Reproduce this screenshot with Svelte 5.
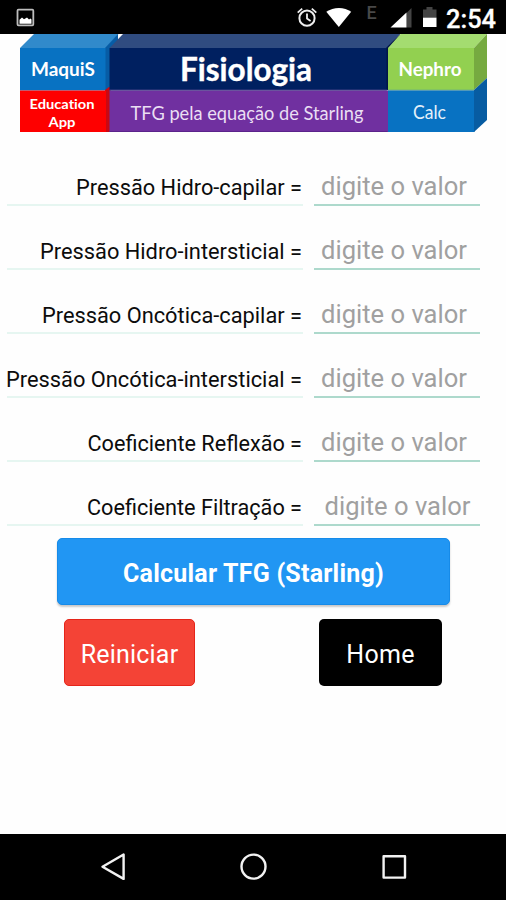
<script>
  const rows = [
    { label: 'Pressão Hidro-capilar =', width: 226 },
    { label: 'Pressão Hidro-intersticial =', width: 262 },
    { label: 'Pressão Oncótica-capilar =', width: 260 },
    { label: 'Pressão Oncótica-intersticial =', width: 296 },
    { label: 'Coeficiente Reflexão =', width: 214.5 },
    { label: 'Coeficiente Filtração =', width: 215, shifted: true }
  ];
</script>

<div class="screen">
  <header class="status">
    <svg width="506" height="34" viewBox="0 0 506 34">
      <rect x="17.5" y="9.700" width="15.800" height="15.600" rx="1" fill="none" stroke="#bdbdbd" stroke-width="1.800" />
      <path d="M19.500 23.800v-4l2.500-2.200 2 1.600 3-1.800 2 2 1.500-1 1 1v4.400z" fill="#fff" />
      <g fill="none" stroke="#eee" stroke-width="2">
        <circle cx="307" cy="18.200" r="7.600" />
        <path d="M307 13.500v5l3.600 2.400M297.700 12.600l4.500-4M316.300 12.600l-4.500-4" stroke-width="1.800" />
      </g>
      <path d="M326.300 11.800C333.500 6.600 344.500 6.600 351.200 11.800L338.800 27z" fill="#fff" />
      <text x="366.500" y="19" class="net">E</text>
      <path d="M411.500 8v19.500h-5V13z" fill="#444" />
      <path d="M406.500 12.500v15h-16z" fill="#fff" />
      <path d="M423 18V9.500h3.500V7h6v2.500h4V18z" fill="#444" />
      <path d="M423 17.700h13.500V27H423z" fill="#fff" />
      <text x="446" y="27.700" class="clock" textLength="50" lengthAdjust="spacingAndGlyphs">2:54</text>
    </svg>
  </header>

  <svg class="banner" width="506" height="100" viewBox="0 34 506 100">
    <path d="M20 48L34 34h84.500L106 48z" fill="#318acb" />
    <path d="M105 48l13-14v14l-8 42h-5z" fill="#075ca5" />
    <path d="M20 48h85.500v42.500H20z" fill="#0872c2" />
    <path d="M105 90l4-3h2v45h-6z" fill="#c90812" />
    <path d="M20 90.500h86V132H20z" fill="#fe0000" />
    <path d="M109.500 48L123 34h277l-13 14z" fill="#304c80" />
    <path d="M386 48l14-14v14l-12 42h-2z" fill="#001548" />
    <path d="M109.500 48h277v42.500h-277z" fill="#002060" />
    <path d="M109.500 90.500h278.500v41.500h-278.500z" fill="#7030a0" />
    <path d="M109.500 90.200h278" stroke="#65509a" />
    <path d="M109.500 131.500h278" stroke="#5b238b" />
    <path d="M388 48l12.500-14H487l-13 14z" fill="#a4dc70" />
    <path d="M388 48h86v42h-86z" fill="#92d050" />
    <path d="M474 48l13-14v44l-13 12z" fill="#76aa40" />
    <path d="M388 90.500h86.500v41.500H388z" fill="#0872c2" />
    <path d="M388 90.300h86" stroke="#4792b1" />
    <path d="M474 90l13-12v42l-13 12z" fill="#075ca2" />
    <g fill="#fff" class="cells">
      <text x="31" y="75.500" font-size="18" font-weight="700" textLength="64" lengthAdjust="spacingAndGlyphs">MaquiS</text>
      <text x="29.500" y="109.300" font-size="14" font-weight="700" textLength="65" lengthAdjust="spacingAndGlyphs">Education</text>
      <text x="48.500" y="127.300" font-size="14" font-weight="700" textLength="27" lengthAdjust="spacingAndGlyphs">App</text>
      <text x="180" y="81" font-size="32" font-weight="700" textLength="132" lengthAdjust="spacingAndGlyphs" stroke="#fff" stroke-width="0.4">Fisiologia</text>
      <text x="130.500" y="120" font-size="19.500" fill="#eadff3" textLength="233" lengthAdjust="spacingAndGlyphs">TFG pela equação de Starling</text>
      <text x="398.500" y="75.500" font-size="18.500" font-weight="700" textLength="63" lengthAdjust="spacingAndGlyphs">Nephro</text>
      <text x="413" y="119" font-size="19" fill="#e4f0fa" textLength="33" lengthAdjust="spacingAndGlyphs">Calc</text>
    </g>
  </svg>

  <main>
    {#each rows as row}
      <div class="row">
        <div class="label">
          <svg width="296" height="36">
            <text x={295 - row.width} y="28.200" textLength={row.width} lengthAdjust="spacingAndGlyphs">{row.label}</text>
          </svg>
        </div>
        <div class="field" class:shifted={row.shifted}>
          <svg width="166" height="36">
            <text x="7" y="28.400" textLength="146" lengthAdjust="spacingAndGlyphs">digite o valor</text>
          </svg>
        </div>
      </div>
    {/each}
    <button class="calc">Calcular TFG (Starling)</button>
    <div class="actions">
      <button class="reset">Reiniciar</button>
      <button class="home">Home</button>
    </div>
  </main>

  <nav>
    <svg width="506" height="66" viewBox="0 834 506 66" fill="none" stroke="#f2f2f2" stroke-width="2.400" stroke-linejoin="round">
      <path d="M102.500 866.700L123.600 854.500v24.400z" />
      <circle cx="253.500" cy="866.600" r="12" />
      <rect x="383.600" y="856.200" width="21.400" height="21.400" />
    </svg>
  </nav>
</div>

<style>
  :global(body) { margin: 0; background: #fff; }
  .screen {
    width: 506px;
    height: 900px;
    display: flex;
    flex-direction: column;
    background: #fefefe;
    font-family: Roboto, "Liberation Sans", sans-serif;
    overflow: hidden;
  }
  svg { display: block; overflow: visible; }
  .status { height: 34px; background: #000; flex: none; }
  .net { font-size: 18px; font-weight: 500; fill: #484848; }
  .clock { font-size: 25.5px; font-weight: 500; fill: #fff; stroke: #fff; stroke-width: 0.3px; }
  .banner { flex: none; }
  .cells { font-family: Lato, "Open Sans", sans-serif; font-variant-ligatures: none; }
  main { flex: 1; display: flex; flex-direction: column; padding-top: 8px; }
  .row {
    height: 64px;
    box-sizing: border-box;
    padding: 25px 26px 0 7px;
    display: flex;
    justify-content: space-between;
    align-items: flex-start;
  }
  .label { width: 296px; height: 37px; border-bottom: 2px solid #e6f6f1; font-size: 21.5px; }
  .label text { fill: #0c0c0c; }
  .field { width: 166px; height: 37px; border-bottom: 2px solid #add9cc; font-size: 25px; }
  .field text { fill: #a0a0a0; }
  .shifted text { transform: translateX(3.5px); }
  button {
    border: 0;
    padding: 3px 0 0;
    border-radius: 5px;
    height: 67px;
    font: 400 25px Roboto, sans-serif;
    color: #fff;
    box-sizing: border-box;
  }
  .calc {
    margin: 12px 0 0 57px;
    width: 393px;
    background: #2196f3;
    border: 1px solid #168be9;
    font-weight: 700;
    letter-spacing: 0.22px;
    box-shadow: 0 2px 2px #c9c9c9;
  }
  .actions { display: flex; justify-content: space-between; margin: 14px 64px; }
  .reset { width: 131px; background: #f44336; border: 1px solid #e5251a; letter-spacing: 0.2px; }
  .home { width: 123px; background: #000; letter-spacing: 0.3px; }
  nav { height: 66px; flex: none; background: #000; }
</style>
